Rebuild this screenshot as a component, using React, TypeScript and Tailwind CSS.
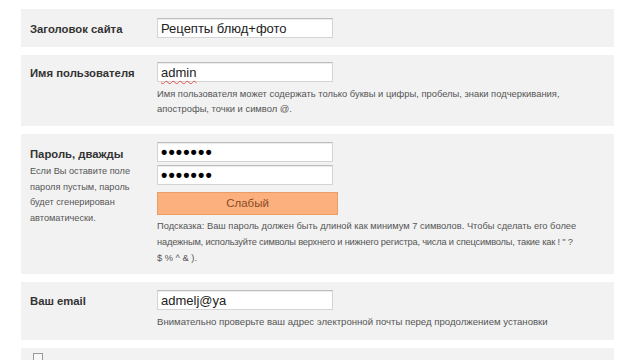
import React from "react";

const font = { fontFamily: '"Liberation Sans", Arial, sans-serif' };

function Field({ children }: { children: React.ReactNode }) {
  return (
    <div className="w-[176px] h-[20px] bg-white border border-[#d4d4d4] border-t-[#bdbdbd] shadow-[inset_0_1px_1px_rgba(0,0,0,0.08)] flex items-center pl-[3px] text-[13px] text-[#222] leading-none">
      {children}
    </div>
  );
}

function Dots() {
  return (
    <Field>
      <span className="text-[18px] tracking-[1.1px] font-bold text-black leading-none">•••••••</span>
    </Field>
  );
}

export default function App() {
  return (
    <div style={font} className="w-[640px] h-[360px] overflow-hidden bg-white pt-[9px] pl-[21px]">
      <div className="w-[593px] flex flex-col gap-[8px]">
        {/* Row 1 */}
        <div className="bg-[#f2f2f2] flex py-[9px] pl-[9px]">
          <div className="w-[127px] h-[20px] text-[11.3px] font-bold text-[#333] leading-[23px]">Заголовок сайта</div>
          <Field>Рецепты блюд+фото</Field>
        </div>

        {/* Row 2 */}
        <div className="bg-[#f2f2f2] flex pt-[7px] pb-[10px] pl-[9px]">
          <div className="w-[127px] h-[20px] text-[11.3px] font-bold text-[#333] leading-[23px]">Имя пользователя</div>
          <div className="flex flex-col">
            <Field>
              <span className="underline decoration-wavy decoration-[#e05050] decoration-[1px] underline-offset-[3px]">admin</span>
            </Field>
            <div className="mt-[4px] text-[9.4px] leading-[15px] text-[#555] whitespace-nowrap">
              Имя пользователя может содержать только буквы и цифры, пробелы, знаки подчеркивания,
              <br />
              апострофы, точки и символ @.
            </div>
          </div>
        </div>

        {/* Row 3 */}
        <div className="bg-[#f2f2f2] flex pt-[8px] pb-[8px] pl-[9px]">
          <div className="w-[127px]">
            <div className="h-[21px] text-[11.3px] font-bold text-[#333] leading-[24px]">Пароль, дважды</div>
            <div className="mt-[1px] text-[9.2px] leading-[15.5px] text-[#555] whitespace-nowrap">
              Если Вы оставите поле
              <br />
              пароля пустым, пароль
              <br />
              будет сгенерирован
              <br />
              автоматически.
            </div>
          </div>
          <div className="flex flex-col">
            <Dots />
            <div className="mt-[3px]">
              <Dots />
            </div>
            <div className="mt-[7px] w-[181px] h-[23px] bg-[#fcb07d] border border-[#eb9d68] flex items-center justify-center text-[11.5px] text-[#8b4a24]">
              Слабый
            </div>
            <div className="mt-[3px] text-[9.3px] leading-[16px] text-[#555] whitespace-nowrap">
              Подсказка: Ваш пароль должен быть длиной как минимум 7 символов. Чтобы сделать его более
              <br />
              <span className="tracking-[-0.2px]">
                надежным, используйте символы верхнего и нижнего регистра, числа и спецсимволы, такие как ! " ?
              </span>
              <br />
              $ % ^ &amp; ).
            </div>
          </div>
        </div>

        {/* Row 4 */}
        <div className="bg-[#f2f2f2] flex pt-[8px] pb-[11px] pl-[9px]">
          <div className="w-[127px] h-[20px] text-[11.3px] font-bold text-[#333] leading-[23px]">Ваш email</div>
          <div className="flex flex-col">
            <Field>admelj@ya</Field>
            <div className="mt-[4px] text-[9.6px] leading-[15px] text-[#555] whitespace-nowrap">
              Внимательно проверьте ваш адрес электронной почты перед продолжением установки
            </div>
          </div>
        </div>

        {/* Row 5 */}
        <div className="bg-[#f2f2f2] flex pt-[5px] pl-[12px] h-[30px]">
          <div className="w-[10px] h-[10px] border border-[#999] bg-[#f8f8f8]" />
        </div>
      </div>
    </div>
  );
}
